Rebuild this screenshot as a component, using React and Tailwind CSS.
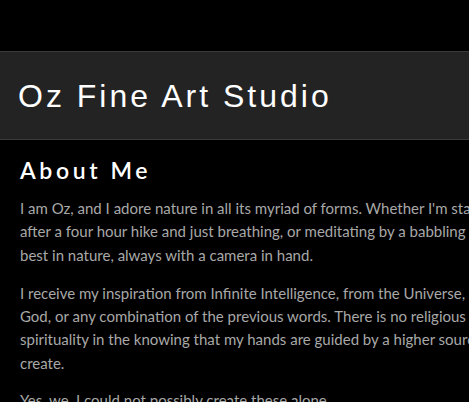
export default function App() {
  const body = "font-['Lato','Liberation_Sans',sans-serif] text-[15px] leading-[23.3px] text-[#a8a8a8]";
  return (
    <div className="min-h-[402px] w-full overflow-hidden bg-black">
      <div className="w-[640px]">
        <div className="h-[51px]" />
        <header className="flex h-[89px] items-center border-y border-[#3a3a3a] bg-[#232323] px-[18px]">
          <h1 className="font-['Liberation_Sans','Arial',sans-serif] text-[32px] tracking-[3px] text-white">
            Oz Fine Art Studio
          </h1>
        </header>
        <main className="px-5 pt-[15px]">
          <h2 className="mb-[12px] font-['Lato',sans-serif] text-[23px] font-semibold leading-[30px] tracking-[3.6px] text-white">
            About Me
          </h2>
          <p className={`${body} mb-[15px] whitespace-nowrap`}>
            I am Oz, and I adore nature in all its myriad of forms. Whether I'm standing on top of a mountain
            <br />
            after a four hour hike and just breathing, or meditating by a babbling brook, I feel at my
            <br />
            best in nature, always with a camera in hand.
          </p>
          <p className={`${body} mb-[14px] whitespace-nowrap`}>
            I receive my inspiration from Infinite Intelligence, from the Universe, from Source, Spirit,
            <br />
            God, or any combination of the previous words. There is no religious meaning, only
            <br />
            spirituality in the knowing that my hands are guided by a higher source when I
            <br />
            create.
          </p>
          <p className={`${body} whitespace-nowrap`}>Yes, we. I could not possibly create these alone.</p>
        </main>
      </div>
    </div>
  );
}
